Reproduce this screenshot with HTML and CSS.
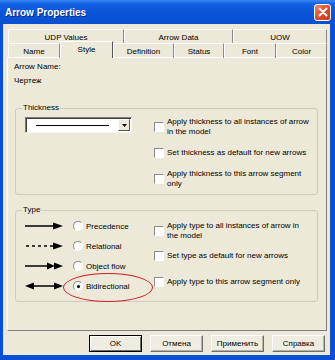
FILE: index.html
```html
<!DOCTYPE html>
<html lang="en">
<head>
    <meta charset="UTF-8">
    <title>Arrow Properties</title>
    <link rel="stylesheet" href="styles.css">
</head>
<body>
    <div class="window">
        <div class="titlebar">
            <span class="title">Arrow Properties</span>
            <span class="close">
                <svg width="10" height="10" viewBox="0 0 10 10"><path d="M1.5 1.5 L8.5 8.5 M8.5 1.5 L1.5 8.5" stroke="#fff" stroke-width="2" stroke-linecap="round"/></svg>
            </span>
        </div>
        <div class="client">
            <div class="tabs tabs-back">
                <div class="tab">UDP Values</div>
                <div class="tab">Arrow Data</div>
                <div class="tab">UOW</div>
            </div>
            <div class="tabs tabs-front">
                <div class="tab">Name</div>
                <div class="tab active">Style</div>
                <div class="tab">Definition</div>
                <div class="tab">Status</div>
                <div class="tab">Font</div>
                <div class="tab">Color</div>
            </div>

            <div class="panel">
                <div class="field-line">Arrow Name:</div>
                <div class="field-line">Чертеж</div>

                <fieldset class="group group-thickness">
                    <legend>Thickness</legend>
                    <div class="group-body">
                        <div class="combo">
                            <span class="combo-line"></span>
                            <span class="combo-btn">
                                <svg width="5" height="3" viewBox="0 0 5 3"><path d="M0 0 H5 L2.5 3 Z" fill="#000"/></svg>
                            </span>
                        </div>
                        <div class="checks">
                            <label class="check"><span class="box"></span><span>Apply thickness to all instances of arrow<br>in the model</span></label>
                            <label class="check"><span class="box"></span><span>Set thickness as default for new arrows</span></label>
                            <label class="check"><span class="box"></span><span>Apply thickness to this arrow segment<br>only</span></label>
                        </div>
                    </div>
                </fieldset>

                <fieldset class="group group-type">
                    <legend>Type</legend>
                    <div class="group-body">
                        <div class="types">
                            <div class="type-row">
                                <svg class="arrow" width="38" height="20" viewBox="0 0 38 20">
                                    <path d="M0 10 H29" stroke="#000" stroke-width="1.5"/>
                                    <path d="M28 6.5 L38 10 L28 13.5 Z" fill="#000"/>
                                </svg>
                                <span class="radio"></span>
                                <span>Precedence</span>
                            </div>
                            <div class="type-row">
                                <svg class="arrow" width="38" height="20" viewBox="0 0 38 20">
                                    <path d="M1 10 H29" stroke="#000" stroke-width="1.5" stroke-dasharray="3 3"/>
                                    <path d="M28 6.5 L38 10 L28 13.5 Z" fill="#000"/>
                                </svg>
                                <span class="radio"></span>
                                <span>Relational</span>
                            </div>
                            <div class="type-row">
                                <svg class="arrow" width="38" height="20" viewBox="0 0 38 20">
                                    <path d="M0 10 H24" stroke="#000" stroke-width="1.5"/>
                                    <path d="M22 6.5 L30 10 L22 13.5 Z" fill="#000"/>
                                    <path d="M29 6.5 L38 10 L29 13.5 Z" fill="#000"/>
                                </svg>
                                <span class="radio"></span>
                                <span>Object flow</span>
                            </div>
                            <div class="type-row selected">
                                <svg class="arrow" width="38" height="20" viewBox="0 0 38 20">
                                    <path d="M6 10 H32" stroke="#000" stroke-width="1.5"/>
                                    <path d="M9 6.5 L0 10 L9 13.5 Z" fill="#000"/>
                                    <path d="M29 6.5 L38 10 L29 13.5 Z" fill="#000"/>
                                </svg>
                                <span class="radio checked"></span>
                                <span>Bidirectional</span>
                                <span class="highlight"></span>
                            </div>
                        </div>
                        <div class="checks checks-type">
                            <label class="check"><span class="box"></span><span>Apply type to all instances of arrow in<br>the model</span></label>
                            <label class="check"><span class="box"></span><span>Set type as default for new arrows</span></label>
                            <label class="check"><span class="box"></span><span>Apply type to this arrow segment only</span></label>
                        </div>
                    </div>
                </fieldset>
            </div>

            <div class="buttons">
                <button class="btn default">OK</button>
                <button class="btn">Отмена</button>
                <button class="btn">Применить</button>
                <button class="btn">Справка</button>
            </div>
        </div>
    </div>
</body>
</html>
```

FILE: styles.css
```css
body {
    margin: 0;
    width: 335px;
    height: 360px;
    overflow: hidden;
    font-family: "Liberation Sans", Arial, sans-serif;
    font-size: 8px;
    color: #000;
}
.window {
    width: 335px;
    height: 360px;
    background: #0a4fd4;
    box-sizing: border-box;
    padding: 0 5px 5px 3px;
}
.titlebar {
    height: 24px;
    margin: 0 -5px 0 -3px;
    padding: 0 4px 0 5px;
    display: flex;
    align-items: center;
    justify-content: space-between;
    background: linear-gradient(#3a86f4 0, #1460e4 4px, #0a55d8 50%, #0a4fd0 100%);
}
.title {
    color: #fff;
    font-weight: bold;
    font-size: 10px;
    text-shadow: 1px 1px #0b2b8c;
}
.close {
    width: 17px;
    height: 17px;
    box-sizing: border-box;
    border: 1px solid #fff;
    border-radius: 3px;
    background: linear-gradient(135deg, #f08a6c 0, #e0502e 45%, #c83a1c 100%);
    display: flex;
    align-items: center;
    justify-content: center;
}
.client {
    background: #ece9d8;
    height: 331px;
    padding: 5px 3px 0 4px;
    box-sizing: border-box;
}
.tabs {
    display: grid;
    height: 14px;
    margin-left: 1px;
}
.tabs-back {
    grid-template-columns: 116px 109px 94px;
}
.tabs-front {
    grid-template-columns: 52px 53px 61px 50px 52px 51px;
    position: relative;
    z-index: 1;
}
.tab {
    display: flex;
    align-items: center;
    justify-content: center;
    border-top: 1px solid #fff;
    border-left: 1px solid #fff;
    border-right: 1px solid #8c8c8c;
    padding-top: 1px;
    box-sizing: border-box;
}
.tab.active {
    margin-top: -2px;
    height: 17px;
    padding-bottom: 3px;
    background: #ece9d8;
    border-right-color: #555;
}
.panel {
    height: 274px;
    box-sizing: border-box;
    border: 1px solid;
    border-color: #fff #7e7e7e #7e7e7e #fff;
    padding: 2px 6px 0 6px;
}
.field-line {
    line-height: 14px;
}
.group {
    margin: 15px 2px 0 1px;
    padding: 4px 8px 5px 9px;
    border: 1px solid #cfcdbf;
    border-radius: 3px;
    min-inline-size: 0;
}
.group legend {
    padding: 0 1px;
    margin-left: -3px;
    line-height: 10px;
}
.group-type {
    margin-top: 10px;
    padding-top: 1px;
}
.group-body {
    display: grid;
    grid-template-columns: 129px auto;
    align-items: start;
}
.combo {
    width: 107px;
    height: 16px;
    box-sizing: border-box;
    background: #fff;
    border: 1px solid;
    border-color: #7a7a7a #f4f4f4 #f4f4f4 #7a7a7a;
    box-shadow: inset 1px 1px #404040;
    display: flex;
    align-items: center;
    justify-content: space-between;
    padding: 0 1px 0 10px;
}
.combo-line {
    width: 73px;
    height: 1px;
    background: #000;
}
.combo-btn {
    width: 12px;
    height: 12px;
    box-sizing: border-box;
    background: #ece9d8;
    border: 1px solid;
    border-color: #fff #555 #555 #fff;
    display: flex;
    align-items: center;
    justify-content: center;
}
.checks {
    display: flex;
    flex-direction: column;
    gap: 11px;
}
.check {
    display: flex;
    align-items: center;
    gap: 3px;
    line-height: 10px;
}
.box {
    width: 10px;
    height: 10px;
    box-sizing: border-box;
    flex: none;
    background: #fff;
    border: 1px solid;
    border-color: #8a8a8a #fff #fff #8a8a8a;
}
.checks-type {
    margin-top: 5px;
    gap: 10px;
}
.checks-type .check:last-child {
    margin-top: 6px;
}
.type-row {
    display: flex;
    align-items: center;
    height: 20px;
    position: relative;
}
.arrow {
    margin-right: 10px;
    flex: none;
}
.radio {
    width: 10px;
    height: 10px;
    box-sizing: border-box;
    border-radius: 50%;
    background: #fff;
    border: 1px solid;
    border-color: #8a8a8a #fff #fff #8a8a8a;
    margin-right: 3px;
    display: flex;
    align-items: center;
    justify-content: center;
}
.radio.checked::after {
    content: "";
    width: 3px;
    height: 3px;
    border-radius: 50%;
    background: #000;
}
.highlight {
    position: absolute;
    left: 38px;
    top: -3px;
    width: 90px;
    height: 29px;
    box-sizing: border-box;
    border: 1.5px solid #d21f2b;
    border-radius: 50%;
}
.buttons {
    display: flex;
    justify-content: flex-end;
    gap: 8px;
    margin: 4px 2px 0 0;
}
.btn {
    width: 53px;
    height: 17px;
    padding: 0;
    font-family: inherit;
    font-size: 8px;
    color: #000;
    background: #efede2;
    border: 1px solid;
    border-color: #fff #6f6f6f #6f6f6f #fff;
    box-shadow: inset -1px -1px #b5b2a4;
}
.btn.default {
    border: 1px solid #000;
    box-shadow: inset 1px 1px #fff, inset -1px -1px #6f6f6f;
}
```
